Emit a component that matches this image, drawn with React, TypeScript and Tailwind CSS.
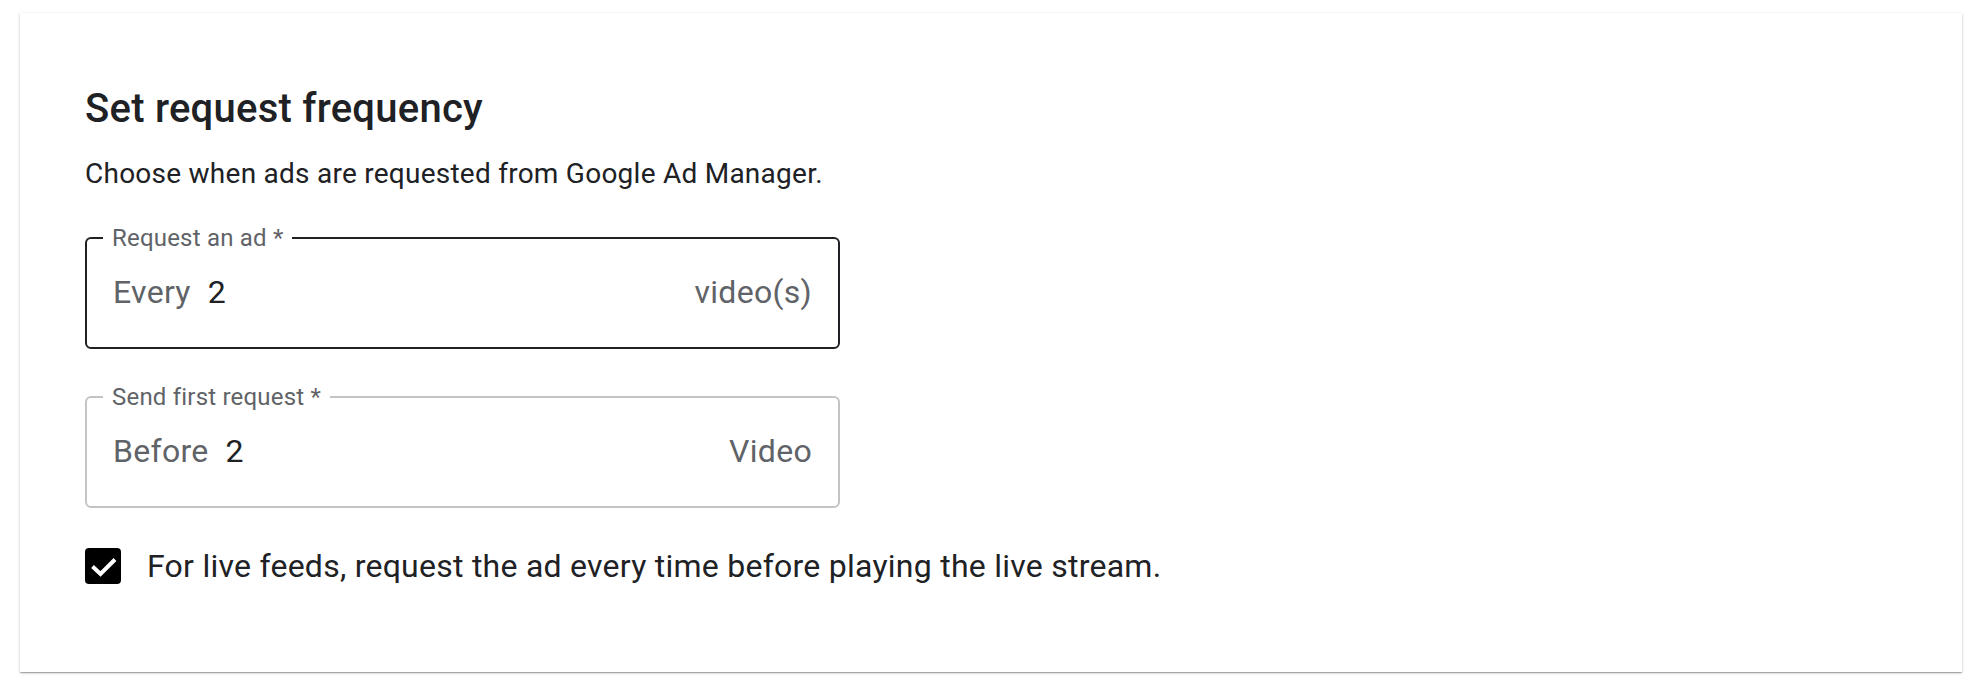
import React from "react";

const FONT = { fontFamily: "Roboto, 'Noto Sans', Arial, sans-serif" };

interface FieldProps {
  label: string;
  prefix: string;
  value: string;
  suffix: string;
  focused?: boolean;
}

function OutlinedField({ label, prefix, value, suffix, focused }: FieldProps) {
  return (
    <fieldset
      className={[
        "w-[755px] rounded-[6px] border-2 px-[26px] pt-[21px] pb-[36px] m-0",
        focused ? "border-[#202124]" : "border-[#c4c4c4]",
      ].join(" ")}
    >
      <legend className="ml-[-10px] px-[9px] text-[24px] leading-[28px] tracking-[0.2px] text-[#5f6368]">
        {label}
      </legend>
      <div className="flex items-center justify-between text-[32px] leading-[38px] tracking-[0.3px]">
        <div className="flex items-center gap-[17px]">
          <span className="text-[#5f6368]">{prefix}</span>
          <span className="text-[#202124]">{value}</span>
        </div>
        <span className="text-[#5f6368]">{suffix}</span>
      </div>
    </fieldset>
  );
}

export default function App() {
  return (
    <div className="min-h-screen bg-white px-[20px] pt-[13px]" style={FONT}>
      <div className="bg-white pl-[65px] pt-[73px] pb-[86px] shadow-[0_1px_3px_0_rgba(0,0,0,0.2),0_1px_1px_0_rgba(0,0,0,0.14),0_2px_1px_-1px_rgba(0,0,0,0.12)]">
        <h2 className="text-[40px] leading-[46px] font-medium tracking-[0.25px] text-[#202124]">
          Set request frequency
        </h2>
        <p className="mt-[25px] text-[28px] leading-[34px] tracking-[0.25px] text-[#202124]">
          Choose when ads are requested from Google Ad Manager.
        </p>

        <div className="mt-[33px] flex flex-col gap-[34px]">
          <OutlinedField label="Request an ad *" prefix="Every" value="2" suffix="video(s)" focused />
          <OutlinedField label="Send first request *" prefix="Before" value="2" suffix="Video" />
        </div>

        {/* Live feed option */}
        <label className="mt-[38px] flex items-center gap-[26px] h-[40px]">
          <svg width="36" height="36" viewBox="0 0 36 36" className="shrink-0">
            <rect x="0" y="0" width="36" height="36" rx="4" fill="#000" />
            <polyline
              points="7.5,18.5 15.5,26 30,11.5"
              fill="none"
              stroke="#fff"
              strokeWidth="4"
            />
          </svg>
          <span className="text-[32px] leading-[40px] tracking-[0.25px] text-[#202124]">
            For live feeds, request the ad every time before playing the live stream.
          </span>
        </label>
      </div>
    </div>
  );
}
